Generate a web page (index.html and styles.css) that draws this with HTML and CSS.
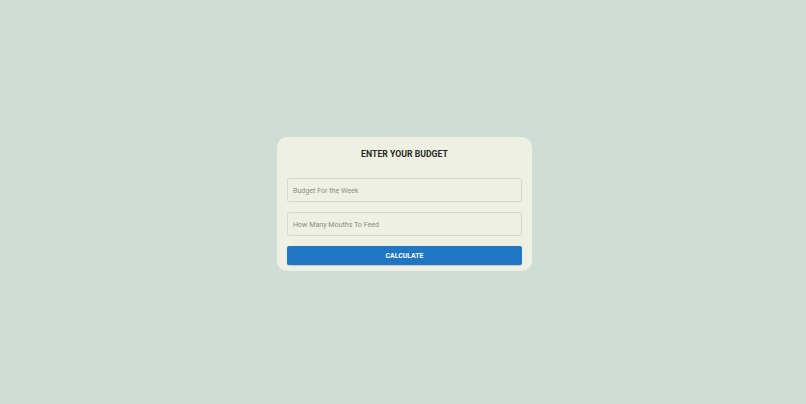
FILE: index.html
```html
<!DOCTYPE html>
<html>
<head>
<meta charset="utf-8">
<link rel="stylesheet" href="styles.css">
</head>
<body>
<main class="page">
  <form class="card">
    <h1 class="title">ENTER YOUR BUDGET</h1>
    <input class="field" type="text" placeholder="Budget For the Week">
    <input class="field" type="text" placeholder="How Many Mouths To Feed">
    <button class="btn" type="button">CALCULATE</button>
  </form>
</main>
</body>
</html>
```

FILE: styles.css
```css
html, body {
  margin: 0;
  padding: 0;
  height: 100%;
}
body {
  background: #cfddd6;
  font-family: Roboto, "Liberation Sans", sans-serif;
}
.page {
  height: 100%;
  display: flex;
  align-items: center;
  justify-content: center;
}
.card {
  width: 255px;
  box-sizing: border-box;
  background: #edf0e3;
  border-radius: 10px;
  padding: 10px 10px 6px;
  display: flex;
  flex-direction: column;
  gap: 10px;
  margin: 4px 0 0 3px;
}
.title {
  margin: 0 0 7px;
  font-size: 8.7px;
  line-height: 14px;
  font-weight: 700;
  text-align: center;
  color: #2a2a26;
}
.field {
  height: 24px;
  box-sizing: border-box;
  margin: 0;
  border: 1px solid #d7dacb;
  border-radius: 2px;
  background: #edf0e3;
  padding: 0 5px;
  font-family: Roboto, "Liberation Sans", sans-serif;
  font-size: 7.1px;
  color: #333;
  outline: none;
}
.field::placeholder {
  color: #8c8d88;
}
.btn {
  height: 19px;
  margin: 0;
  border: none;
  border-radius: 2px;
  background: #1f76c2;
  color: #fff;
  font-family: Roboto, "Liberation Sans", sans-serif;
  font-size: 6.9px;
  font-weight: 700;
  box-shadow: 0 1px 1px rgba(0,0,0,0.15);
}
```
